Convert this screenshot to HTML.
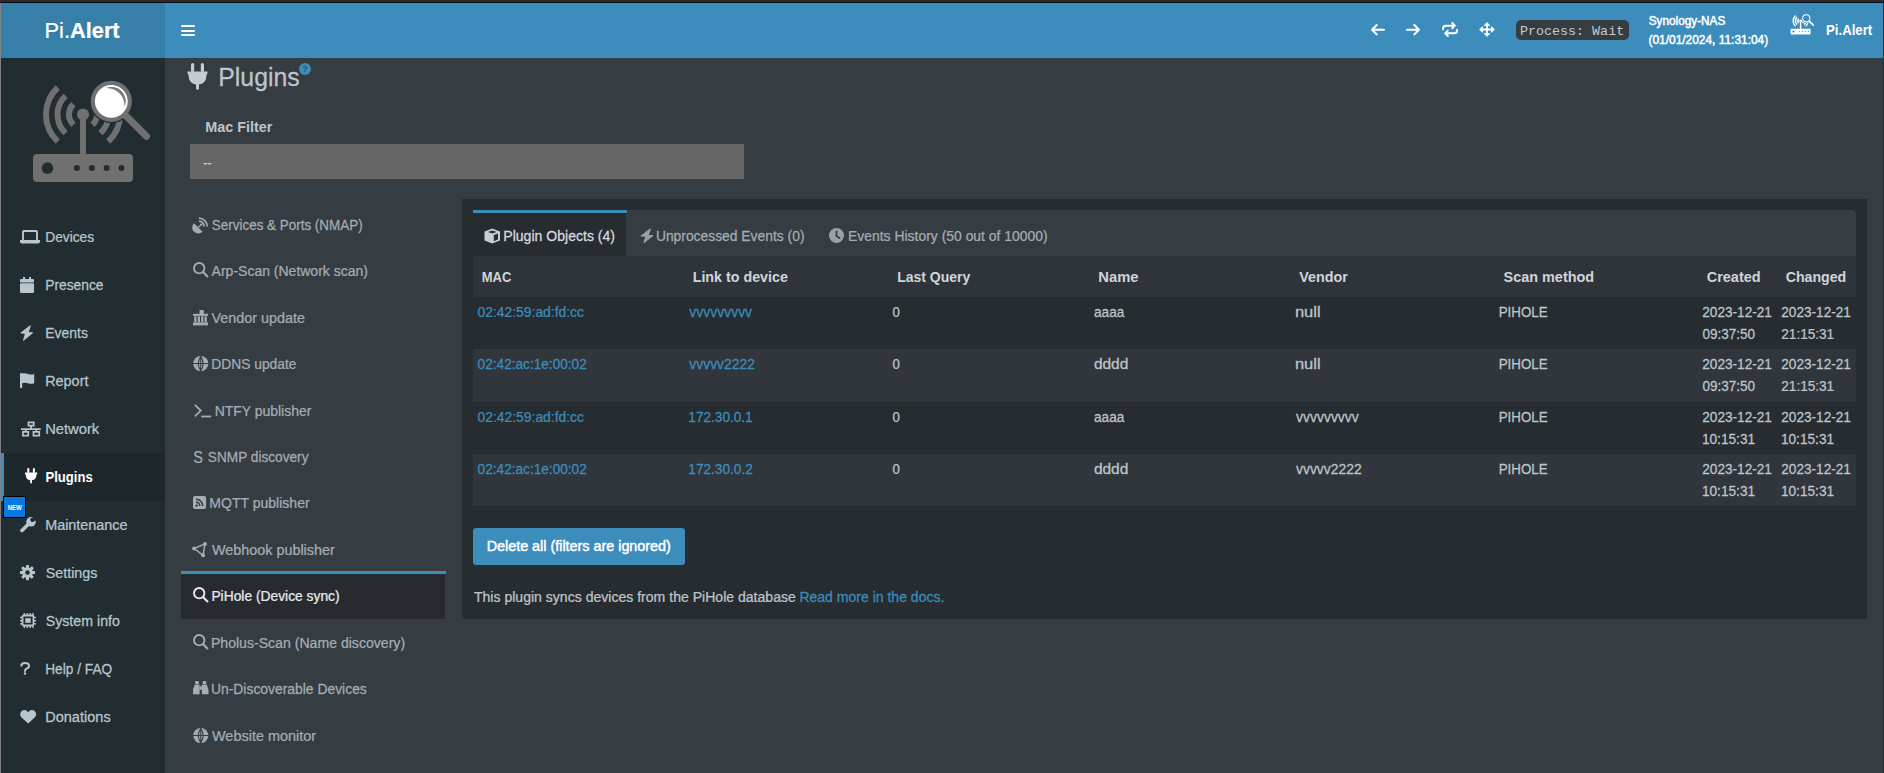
<!DOCTYPE html>
<html><head><meta charset="utf-8"><style>
html,body{margin:0;padding:0;width:1884px;height:773px;overflow:hidden;background:#353c42}
.b{position:absolute}
.i{position:absolute;overflow:visible}
</style></head><body>
<div class="b" style="left:0px;top:0px;width:1884px;height:773px;background:#353c42;"></div>
<div class="b" style="left:0px;top:0px;width:1884px;height:2px;background:#2b2a33;"></div>
<div class="b" style="left:0px;top:2px;width:1884px;height:1px;background:#0c0c0e;"></div>
<div class="b" style="left:1px;top:3px;width:164px;height:55px;background:#367fa9;"></div>
<div class="b" style="left:165px;top:3px;width:1718px;height:55px;background:#3c8dbc;"></div>
<div class="b" style="left:0px;top:3px;width:1px;height:770px;background:#807e87;"></div>
<div class="b" style="left:1883px;top:3px;width:1px;height:770px;background:#29323a;"></div>
<div class="b" style="left:1px;top:58px;width:164px;height:715px;background:#222d32;"></div>
<div class="b" style="left:181px;top:25px;width:13.599999999999994px;height:2px;background:#ffffff;border-radius:1px"></div>
<div class="b" style="left:181px;top:29.5px;width:13.599999999999994px;height:2.0px;background:#ffffff;border-radius:1px"></div>
<div class="b" style="left:181px;top:34px;width:13.599999999999994px;height:2px;background:#ffffff;border-radius:1px"></div>
<svg class="i" style="left:1371.1px;top:23.6px;width:14px;height:11.4px" viewBox="0 0 14 11.4" fill="#ffffff"><path d="M5.7 1 L1 5.7 L5.7 10.4 M1 5.7 H13" stroke="#fff" stroke-width="2" fill="none" stroke-linecap="round" stroke-linejoin="round"/></svg>
<svg class="i" style="left:1406.1px;top:23.6px;width:14px;height:11.4px" viewBox="0 0 14 11.4" fill="#ffffff"><path d="M8.3 1 L13 5.7 L8.3 10.4 M13 5.7 H1" stroke="#fff" stroke-width="2" fill="none" stroke-linecap="round" stroke-linejoin="round"/></svg>
<svg class="i" style="left:1441.6px;top:21.8px;width:16px;height:15px" viewBox="0 0 16 15" fill="#ffffff"><path d="M1 7.3 V6.6 Q1 3.7 3.9 3.7 H12.6 M10.2 1 L12.9 3.7 L10.2 6.4 M15 7.7 V8.4 Q15 11.3 12.1 11.3 H3.4 M5.8 8.6 L3.1 11.3 L5.8 14" stroke="#fff" stroke-width="1.9" fill="none" stroke-linecap="round" stroke-linejoin="round"/></svg>
<svg class="i" style="left:1478.5px;top:21.8px;width:16px;height:15px" viewBox="0 0 16 15" fill="#ffffff"><path d="M8 2.5 V12.5 M2.5 7.5 H13.5" stroke="#fff" stroke-width="1.8"/><path d="M8 0.6 L10.7 3.4 H5.3 Z M8 14.4 L10.7 11.6 H5.3 Z M0.6 7.5 L3.4 4.8 V10.2 Z M15.4 7.5 L12.6 4.8 V10.2 Z" fill="#fff" stroke="#fff" stroke-width="0.9" stroke-linejoin="round"/></svg>
<div class="b" style="left:1516px;top:20px;width:113px;height:20px;background:#353c42;border-radius:5px"></div>
<svg class="i" style="left:1787.9px;top:12.4px;width:28px;height:25px" viewBox="0 0 140 125" fill="#ffffff"><rect x="13" y="84" width="100" height="28" rx="4" fill="#fff"/><circle cx="27.5" cy="98.1" r="5.8" fill="#3c8dbc"/><circle cx="56.9" cy="98.1" r="3" fill="#3c8dbc"/><circle cx="71.8" cy="98.1" r="3" fill="#3c8dbc"/><circle cx="86.6" cy="98.1" r="3" fill="#3c8dbc"/><circle cx="101.5" cy="98.1" r="3" fill="#3c8dbc"/><rect x="59.3125" y="45" width="7.375" height="40" fill="#fff"/><circle cx="63" cy="44.5" r="6.75" fill="#fff"/><path d="M53.45 34.26 A14 14 0 0 0 53.45 54.74" stroke="#fff" stroke-width="7.5" fill="none"/><path d="M45.61 25.85 A25.5 25.5 0 0 0 45.61 63.15" stroke="#fff" stroke-width="7.5" fill="none"/><path d="M37.77 17.44 A37 37 0 0 0 37.77 71.56" stroke="#fff" stroke-width="7.5" fill="none"/><path d="M72.55 54.74 A14 14 0 0 0 72.55 34.26" stroke="#fff" stroke-width="7.5" fill="none"/><path d="M80.39 63.15 A25.5 25.5 0 0 0 80.39 25.85" stroke="#fff" stroke-width="7.5" fill="none"/><path d="M88.23 71.56 A37 37 0 0 0 88.23 17.44" stroke="#fff" stroke-width="7.5" fill="none"/><circle cx="91.3" cy="31.3" r="23" fill="#3c8dbc"/><path d="M104 44 L126.5 66.2" stroke="#3c8dbc" stroke-width="12.5" stroke-linecap="round"/><path d="M104 44 L126.5 66.2" stroke="#fff" stroke-width="8.75" stroke-linecap="round"/><circle cx="91.3" cy="31.3" r="20.6" fill="#fff"/><circle cx="91.3" cy="31.3" r="15.350000000000001" fill="#3c8dbc"/></svg>
<svg class="i" style="left:20px;top:70px;width:140px;height:125px" viewBox="0 0 140 125" fill="#707070"><rect x="13" y="84" width="100" height="28" rx="4" fill="#707070"/><circle cx="27.5" cy="98.1" r="5.8" fill="#222d32"/><circle cx="56.9" cy="98.1" r="3" fill="#222d32"/><circle cx="71.8" cy="98.1" r="3" fill="#222d32"/><circle cx="86.6" cy="98.1" r="3" fill="#222d32"/><circle cx="101.5" cy="98.1" r="3" fill="#222d32"/><rect x="60.05" y="45" width="5.9" height="40" fill="#707070"/><circle cx="63" cy="44.5" r="6.0" fill="#707070"/><path d="M53.45 34.26 A14 14 0 0 0 53.45 54.74" stroke="#707070" stroke-width="6.0" fill="none"/><path d="M45.61 25.85 A25.5 25.5 0 0 0 45.61 63.15" stroke="#707070" stroke-width="6.0" fill="none"/><path d="M37.77 17.44 A37 37 0 0 0 37.77 71.56" stroke="#707070" stroke-width="6.0" fill="none"/><path d="M72.55 54.74 A14 14 0 0 0 72.55 34.26" stroke="#707070" stroke-width="6.0" fill="none"/><path d="M80.39 63.15 A25.5 25.5 0 0 0 80.39 25.85" stroke="#707070" stroke-width="6.0" fill="none"/><path d="M88.23 71.56 A37 37 0 0 0 88.23 17.44" stroke="#707070" stroke-width="6.0" fill="none"/><circle cx="91.3" cy="31.3" r="21.9" fill="#222d32"/><path d="M104 44 L126.5 66.2" stroke="#222d32" stroke-width="10.0" stroke-linecap="round"/><path d="M104 44 L126.5 66.2" stroke="#707070" stroke-width="7.0" stroke-linecap="round"/><circle cx="91.3" cy="31.3" r="20.6" fill="#707070"/><circle cx="91.3" cy="31.3" r="16.400000000000002" fill="#ffffff"/><path d="M85.91 17.95 L87.23 17.49 L88.59 17.16 L89.98 16.96 L91.38 16.90 L92.78 16.98 L94.17 17.19 L95.53 17.54 L96.85 18.01 L98.12 18.62 L99.32 19.34 L100.44 20.18 L101.48 21.12 L102.42 22.16 L103.26 23.28 L103.98 24.48 L104.59 25.75 L105.06 27.07 L105.41 28.43 L105.62 29.82 L105.70 31.22 L105.64 32.62 L105.44 34.01 L105.11 35.37 L104.65 36.69 L104.65 36.69 L104.42 35.17 L104.30 33.79 L104.11 32.48 L103.85 31.23 L103.52 30.03 L103.10 28.90 L102.63 27.82 L102.08 26.80 L101.48 25.83 L100.83 24.91 L100.12 24.05 L99.36 23.24 L98.55 22.48 L97.69 21.77 L96.77 21.12 L95.80 20.52 L94.78 19.97 L93.70 19.50 L92.57 19.08 L91.37 18.75 L90.12 18.49 L88.81 18.30 L87.43 18.18 L85.91 17.95 Z" fill="#7a7a7a"/></svg>
<div class="b" style="left:1px;top:453px;width:164px;height:48px;background:#1e282c;"></div>
<div class="b" style="left:1px;top:453px;width:3px;height:48px;background:#3c8dbc;"></div>
<svg class="i" style="left:19.8px;top:229.5px;width:20px;height:14px" viewBox="0 0 20 14" fill="#b8c7ce"><path d="M3 10.5 V2 Q3 1 4 1 H16 Q17 1 17 2 V10.5" stroke="#b8c7ce" stroke-width="1.9" fill="none"/><path d="M0 10 H20 V11.5 Q20 13.5 18 13.5 H2 Q0 13.5 0 11.5 Z"/></svg>
<svg class="i" style="left:20px;top:276.5px;width:14px;height:16px" viewBox="0 0 14 16" fill="#b8c7ce"><rect x="3" y="0" width="2" height="3"/><rect x="9" y="0" width="2" height="3"/><rect x="0" y="2" width="14" height="3.5" rx="1"/><rect x="0" y="6.2" width="14" height="9.8" rx="1"/></svg>
<svg class="i" style="left:20.4px;top:324.5px;width:13.5px;height:16px" viewBox="0 0 13.5 16" fill="#b8c7ce"><path d="M10.2 1 L1.1 8 L5.6 8.2 L3.6 15.2 L12.4 7.8 L7.9 7.5 Z" stroke="#b8c7ce" stroke-width="1.1" stroke-linejoin="round"/></svg>
<svg class="i" style="left:19.7px;top:373px;width:15px;height:15.5px" viewBox="0 0 15 15.5" fill="#b8c7ce"><rect x="0" y="0" width="2.2" height="15.2" rx="1"/><path d="M1.5 0.6 Q5 -0.3 8 0.9 Q11 2 14.2 0.9 V10.2 Q11 11.3 8 10.2 Q5 9.1 1.5 10.3 Z"/></svg>
<svg class="i" style="left:20.9px;top:420.5px;width:20px;height:16px" viewBox="0 0 20 16" fill="#b8c7ce"><rect x="7.45" y="1.35" width="5.3" height="3.3" stroke="#b8c7ce" stroke-width="1.7" fill="none"/><rect x="9.2" y="5" width="1.7" height="3"/><rect x="0" y="7.3" width="19.8" height="1.7"/><rect x="3.8" y="8.5" width="1.7" height="2.5"/><rect x="14.4" y="8.5" width="1.7" height="2.5"/><rect x="1.95" y="10.85" width="5.3" height="3.8" stroke="#b8c7ce" stroke-width="1.7" fill="none"/><rect x="12.45" y="10.85" width="5.8" height="3.8" stroke="#b8c7ce" stroke-width="1.7" fill="none"/></svg>
<svg class="i" style="left:24.8px;top:468.4px;width:12.2px;height:15.2px" viewBox="0 0 12.2 15.2" fill="#ffffff"><rect x="2.3" y="0" width="2" height="5" rx="1"/><rect x="7.9" y="0" width="2" height="5" rx="1"/><path d="M0 4.5 H12.2 V6 Q11.3 6.5 11.3 7.5 Q11.3 11.5 7 12.3 V15.2 H5.2 V12.3 Q0.9 11.5 0.9 7.5 Q0.9 6.5 0 6 Z"/></svg>
<svg class="i" style="left:20px;top:517px;width:16px;height:15.5px" viewBox="0 0 16 15.5" fill="#b8c7ce"><path d="M2 13.5 L8.5 7" stroke="#b8c7ce" stroke-width="3.6" stroke-linecap="round"/><circle cx="11" cy="4.8" r="4.8"/><path d="M11 4.8 L14.5 -1.5 L17.5 3 Z" fill="#222d32"/><circle cx="12.5" cy="2.8" r="2.2" fill="#222d32"/></svg>
<svg class="i" style="left:20.4px;top:565px;width:15px;height:15.2px" viewBox="0 0 15 15.2" fill="#b8c7ce"><circle cx="7.5" cy="7.6" r="5.3"/><rect x="6" y="0" width="3" height="4" rx="0.6" transform="rotate(0 7.5 7.6)"/><rect x="6" y="0" width="3" height="4" rx="0.6" transform="rotate(45 7.5 7.6)"/><rect x="6" y="0" width="3" height="4" rx="0.6" transform="rotate(90 7.5 7.6)"/><rect x="6" y="0" width="3" height="4" rx="0.6" transform="rotate(135 7.5 7.6)"/><rect x="6" y="0" width="3" height="4" rx="0.6" transform="rotate(180 7.5 7.6)"/><rect x="6" y="0" width="3" height="4" rx="0.6" transform="rotate(225 7.5 7.6)"/><rect x="6" y="0" width="3" height="4" rx="0.6" transform="rotate(270 7.5 7.6)"/><rect x="6" y="0" width="3" height="4" rx="0.6" transform="rotate(315 7.5 7.6)"/><circle cx="7.5" cy="7.6" r="2.3" fill="#222d32"/></svg>
<svg class="i" style="left:20.1px;top:612.6px;width:16px;height:15.1px" viewBox="0 0 16 15.1" fill="#b8c7ce"><rect x="2.5" y="2.5" width="11" height="10" rx="1.5" stroke="#b8c7ce" stroke-width="1.8" fill="none"/><rect x="5.3" y="5.2" width="5.4" height="4.6"/><rect x="3.6" y="0" width="1.3" height="2.5"/><rect x="3.6" y="12.6" width="1.3" height="2.5"/><rect x="6.5" y="0" width="1.3" height="2.5"/><rect x="6.5" y="12.6" width="1.3" height="2.5"/><rect x="9.4" y="0" width="1.3" height="2.5"/><rect x="9.4" y="12.6" width="1.3" height="2.5"/><rect x="12.3" y="0" width="1.3" height="2.5"/><rect x="12.3" y="12.6" width="1.3" height="2.5"/><rect x="0" y="3.8" width="2.5" height="1.3"/><rect x="13.5" y="3.8" width="2.5" height="1.3"/><rect x="0" y="7.0" width="2.5" height="1.3"/><rect x="13.5" y="7.0" width="2.5" height="1.3"/><rect x="0" y="10.2" width="2.5" height="1.3"/><rect x="13.5" y="10.2" width="2.5" height="1.3"/></svg>
<svg class="i" style="left:20.4px;top:662.2px;width:10.5px;height:12.8px" viewBox="0 0 10.5 12.8" fill="#b8c7ce"><path d="M1.3 3.8 Q1.3 1 5.1 1 Q9 1 9 3.9 Q9 5.8 6.5 6.6 Q5 7.1 5 9" stroke="#b8c7ce" stroke-width="2" fill="none" stroke-linecap="round"/><circle cx="5" cy="11.6" r="1.25"/></svg>
<svg class="i" style="left:19.7px;top:710px;width:16.3px;height:13.6px" viewBox="0 0 16.3 13.6" fill="#b8c7ce"><path d="M8.15 13.6 L1.3 7.2 Q-0.5 5 0.4 2.7 Q1.5 0 4.3 0 Q6.6 0 8.15 2.2 Q9.7 0 12 0 Q14.8 0 15.9 2.7 Q16.8 5 15 7.2 Z"/></svg>
<div class="b" style="left:3px;top:496px;width:23px;height:22px;background:#0b78e0;border:1px solid #000;box-sizing:border-box"></div>
<svg class="i" style="left:187px;top:62.5px;width:21px;height:27px" viewBox="0 0 21 27" fill="#c5cbd0"><rect x="4" y="0" width="3.2" height="9" rx="1.6"/><rect x="13.8" y="0" width="3.2" height="9" rx="1.6"/><path d="M0.5 8.5 H20.5 V10.5 Q19.5 11 19.5 12.5 Q19.5 20 12 21.5 V26 Q10.5 27.5 9 26 V21.5 Q1.5 20 1.5 12.5 Q1.5 11 0.5 10.5 Z"/></svg>
<div class="b" style="left:299px;top:63px;width:12px;height:12px;border-radius:50%;background:#3c8dbc;color:#2a4d68;font:bold 9px/12px 'Liberation Sans',sans-serif;text-align:center">?</div>
<div class="b" style="left:190px;top:144px;width:554px;height:35px;background:#666666;"></div>
<svg class="i" style="left:192.5px;top:216.5px;width:16px;height:16px" viewBox="0 0 16 16" fill="#a6acb2"><path d="M1 6.2 A6.08 6.08 0 0 0 9.6 14.8 Z"/><path d="M5.3 10.5 L8 7.8" stroke="#a6acb2" stroke-width="1.2"/><circle cx="8.2" cy="7.6" r="1.1"/><path d="M5.9 1.1 A8.3 8.3 0 0 1 14.2 9.4 M5.9 4.2 A5.2 5.2 0 0 1 11.1 9.4" stroke="#a6acb2" stroke-width="1.7" fill="none"/></svg>
<svg class="i" style="left:192.7px;top:262.2px;width:15.5px;height:15.5px" viewBox="0 0 15.5 15.5" fill="#a6acb2"><circle cx="6.2" cy="6.2" r="5.2" stroke="#a6acb2" stroke-width="1.9" fill="none"/><path d="M10 10 L14.4 14.4" stroke="#a6acb2" stroke-width="2.1" stroke-linecap="round"/></svg>
<svg class="i" style="left:193.2px;top:309.6px;width:15px;height:15.4px" viewBox="0 0 15 15.4" fill="#a6acb2"><rect x="6.6" y="0" width="4.2" height="4"/><rect x="0" y="3.8" width="15" height="2.1"/><rect x="1.2" y="6.4" width="2.3" height="5.8"/><rect x="4.7" y="6.4" width="2.3" height="5.8"/><rect x="8.1" y="6.4" width="2.3" height="5.8"/><rect x="11.5" y="6.4" width="2.3" height="5.8"/><rect x="0" y="12.4" width="15" height="3"/></svg>
<svg class="i" style="left:192.8px;top:355.6px;width:15.5px;height:15.1px" viewBox="0 0 15.5 15.1" fill="#a6acb2"><circle cx="7.75" cy="7.55" r="7.55"/><path d="M0 7.55 H15.5 M7.75 0 V15.1 M7.75 0.2 Q3 7.55 7.75 14.9 M7.75 0.2 Q12.5 7.55 7.75 14.9" stroke="#353c42" stroke-width="1.1" fill="none"/></svg>
<svg class="i" style="left:193.9px;top:403.6px;width:17.2px;height:13.4px" viewBox="0 0 17.2 13.4" fill="#a6acb2"><path d="M0.8 0.8 L6.8 6.6 L0.8 12.4" stroke="#a6acb2" stroke-width="1.8" fill="none"/><rect x="7.2" y="11.6" width="10" height="1.8"/></svg>
<svg class="i" style="left:193.2px;top:495.9px;width:13.1px;height:13.1px" viewBox="0 0 13.1 13.1" fill="#a6acb2"><rect x="0" y="0" width="13.1" height="13.1" rx="2"/><path d="M3 3.3 A6.8 6.8 0 0 1 9.8 10.1 M3 6.3 A3.8 3.8 0 0 1 6.8 10.1" stroke="#353c42" stroke-width="1.6" fill="none"/><circle cx="3.6" cy="9.6" r="1.2" fill="#353c42"/></svg>
<svg class="i" style="left:192px;top:541.5px;width:16px;height:15.5px" viewBox="0 0 16 15.5" fill="#a6acb2"><path d="M2.1 6.5 L13 1.9 L11.1 13.3 Z" stroke="#a6acb2" stroke-width="1.5" fill="none" stroke-linejoin="round"/><circle cx="2.1" cy="6.5" r="2"/><circle cx="13" cy="1.9" r="1.9"/><circle cx="11.1" cy="13.3" r="2"/></svg>
<div class="b" style="left:181px;top:571px;width:265px;height:3px;background:#3c8dbc;"></div>
<div class="b" style="left:181px;top:574px;width:264px;height:45px;background:#272b2f;"></div>
<svg class="i" style="left:192.7px;top:587.2px;width:15.5px;height:15.5px" viewBox="0 0 15.5 15.5" fill="#e8ebee"><circle cx="6.2" cy="6.2" r="5.2" stroke="#e8ebee" stroke-width="1.9" fill="none"/><path d="M10 10 L14.4 14.4" stroke="#e8ebee" stroke-width="2.1" stroke-linecap="round"/></svg>
<svg class="i" style="left:192.7px;top:634.2px;width:15.5px;height:15.5px" viewBox="0 0 15.5 15.5" fill="#a6acb2"><circle cx="6.2" cy="6.2" r="5.2" stroke="#a6acb2" stroke-width="1.9" fill="none"/><path d="M10 10 L14.4 14.4" stroke="#a6acb2" stroke-width="2.1" stroke-linecap="round"/></svg>
<svg class="i" style="left:192.8px;top:681.2px;width:15.5px;height:13.2px" viewBox="0 0 15.5 13.2" fill="#a6acb2"><rect x="2.2" y="0" width="3.6" height="3" rx="0.6"/><rect x="9.7" y="0" width="3.6" height="3" rx="0.6"/><path d="M1.8 3.4 H6.6 V13.2 H0 V8.5 Z M8.9 3.4 H13.7 L15.5 8.5 V13.2 H8.9 Z"/><rect x="6.6" y="5.2" width="2.3" height="3.6"/></svg>
<svg class="i" style="left:192.8px;top:727.6px;width:15.5px;height:15.1px" viewBox="0 0 15.5 15.1" fill="#a6acb2"><circle cx="7.75" cy="7.55" r="7.55"/><path d="M0 7.55 H15.5 M7.75 0 V15.1 M7.75 0.2 Q3 7.55 7.75 14.9 M7.75 0.2 Q12.5 7.55 7.75 14.9" stroke="#353c42" stroke-width="1.1" fill="none"/></svg>
<div class="b" style="left:462px;top:199px;width:1405px;height:420px;background:#272c30;border-radius:0 0 3px 3px"></div>
<div class="b" style="left:473px;top:210px;width:1383px;height:46px;background:#353c42;border-radius:0 4.5px 0 0"></div>
<div class="b" style="left:473px;top:210px;width:154px;height:3px;background:#3c8dbc;"></div>
<div class="b" style="left:473px;top:213px;width:153px;height:45px;background:#272c30;"></div>
<svg class="i" style="left:484px;top:227.5px;width:16px;height:16px" viewBox="0 0 16 16" fill="#c8ced3"><path d="M8.3 0.5 L16 3.5 V12.5 L8.3 15.5 L0.5 12.5 V3.5 Z" fill="#c8ced3"/><path d="M8.3 2.4 L12.8 4 L8.3 5.6 L3.8 4 Z" fill="#272c30"/><path d="M9.8 7 L14 5.6 V11.6 L9.8 13.2 Z" fill="#272c30"/></svg>
<svg class="i" style="left:639.5px;top:227.5px;width:14px;height:16px" viewBox="0 0 14 16" fill="#9aa1a7"><path d="M10.4 1 L1.3 7.9 L5.9 8.1 L4 14.6 L12.8 7.6 L8.1 7.3 Z" stroke="#9aa1a7" stroke-width="1.1" stroke-linejoin="round"/></svg>
<svg class="i" style="left:829px;top:228px;width:15px;height:15px" viewBox="0 0 15 15" fill="#9aa1a7"><circle cx="7.5" cy="7.5" r="7.5"/><path d="M7.5 3.5 V8 L10.5 10" stroke="#353c42" stroke-width="1.8" fill="none" stroke-linecap="round"/></svg>
<div class="b" style="left:473px;top:256px;width:1383px;height:41px;background:#2e343a;"></div>
<div class="b" style="left:473px;top:297px;width:1383px;height:52.25px;background:#272c30;"></div>
<div class="b" style="left:473px;top:349.25px;width:1383px;height:52.25px;background:#30363c;"></div>
<div class="b" style="left:473px;top:401.5px;width:1383px;height:52.25px;background:#272c30;"></div>
<div class="b" style="left:473px;top:453.75px;width:1383px;height:52.25px;background:#30363c;"></div>
<div class="b" style="left:473px;top:528px;width:212px;height:37px;background:#3c8dbc;border-radius:3px"></div>
<svg class="i" style="left:0;top:0;width:1884px;height:773px" viewBox="0 0 1884 773">
<text x="0.00" y="0.00" font-size="22.8" fill="#ffffff" font-weight="normal" font-family="Liberation Sans" transform="translate(44.6 38) scale(0.955 1)"  stroke="#ffffff" stroke-width="0.25">Pi.<tspan font-weight="bold">Alert</tspan></text>
<text x="0.00" y="0.00" font-size="13.51" fill="#c8c8c8" font-weight="normal" font-family="Liberation Mono" transform="translate(1519.88 35.00) scale(0.9902 1)" >Process: Wait</text>
<text x="0.00" y="0.00" font-size="12.65" fill="#ffffff" font-weight="normal" font-family="Liberation Sans" transform="translate(1648.72 25.00) scale(0.9311 1)" stroke="#fff" stroke-width="0.5">Synology-NAS</text>
<text x="0.00" y="0.00" font-size="12.79" fill="#ffffff" font-weight="normal" font-family="Liberation Sans" transform="translate(1648.50 44.00) scale(0.9321 1)" stroke="#fff" stroke-width="0.5">(01/01/2024, 11:31:04)</text>
<text x="0.00" y="0.00" font-size="14.39" fill="#ffffff" font-weight="bold" font-family="Liberation Sans" transform="translate(1826.06 35.00) scale(0.9164 1)" >Pi.Alert</text>
<text x="0.00" y="0.00" font-size="14.53" fill="#b8c7ce" font-weight="normal" font-family="Liberation Sans" transform="translate(45.22 242.00) scale(0.9460 1)" stroke="#b8c7ce" stroke-width="0.25">Devices</text>
<text x="0.00" y="0.00" font-size="14.53" fill="#b8c7ce" font-weight="normal" font-family="Liberation Sans" transform="translate(45.21 290.00) scale(0.9504 1)" stroke="#b8c7ce" stroke-width="0.25">Presence</text>
<text x="0.00" y="0.00" font-size="14.53" fill="#b8c7ce" font-weight="normal" font-family="Liberation Sans" transform="translate(45.20 338.00) scale(0.9618 1)" stroke="#b8c7ce" stroke-width="0.25">Events</text>
<text x="0.00" y="0.00" font-size="14.53" fill="#b8c7ce" font-weight="normal" font-family="Liberation Sans" transform="translate(45.16 386.00) scale(0.9930 1)" stroke="#b8c7ce" stroke-width="0.25">Report</text>
<text x="0.00" y="0.00" font-size="14.53" fill="#b8c7ce" font-weight="normal" font-family="Liberation Sans" transform="translate(45.13 434.00) scale(1.0152 1)" stroke="#b8c7ce" stroke-width="0.25">Network</text>
<text x="0.00" y="0.00" font-size="14.53" fill="#ffffff" font-weight="bold" font-family="Liberation Sans" transform="translate(45.47 482.00) scale(0.8997 1)" >Plugins</text>
<text x="0.00" y="0.00" font-size="14.53" fill="#b8c7ce" font-weight="normal" font-family="Liberation Sans" transform="translate(45.16 530.00) scale(0.9915 1)" stroke="#b8c7ce" stroke-width="0.25">Maintenance</text>
<text x="0.00" y="0.00" font-size="14.53" fill="#b8c7ce" font-weight="normal" font-family="Liberation Sans" transform="translate(45.71 578.00) scale(0.9855 1)" stroke="#b8c7ce" stroke-width="0.25">Settings</text>
<text x="0.00" y="0.00" font-size="14.53" fill="#b8c7ce" font-weight="normal" font-family="Liberation Sans" transform="translate(45.71 626.00) scale(0.9776 1)" stroke="#b8c7ce" stroke-width="0.25">System info</text>
<text x="0.00" y="0.00" font-size="14.53" fill="#b8c7ce" font-weight="normal" font-family="Liberation Sans" transform="translate(45.22 674.00) scale(0.9424 1)" stroke="#b8c7ce" stroke-width="0.25">Help / FAQ</text>
<text x="0.00" y="0.00" font-size="14.53" fill="#b8c7ce" font-weight="normal" font-family="Liberation Sans" transform="translate(45.15 722.00) scale(1.0026 1)" stroke="#b8c7ce" stroke-width="0.25">Donations</text>
<text x="0.00" y="0.00" font-size="6.98" fill="#ffffff" font-weight="bold" font-family="Liberation Sans" transform="translate(7.64 510.00) scale(0.8670 1)" >NEW</text>
<text x="0.00" y="0.00" font-size="26.02" fill="#bec5cb" font-weight="normal" font-family="Liberation Sans" transform="translate(218.30 86.00) scale(0.9541 1)"  stroke="#bec5cb" stroke-width="0.25">Plugins</text>
<text x="0.00" y="0.00" font-size="14.39" fill="#bec5cb" font-weight="bold" font-family="Liberation Sans" transform="translate(205.18 132.00) scale(0.9998 1)" >Mac Filter</text>
<text x="203.00" y="167.00" font-size="13" fill="#cfcfcf" font-weight="normal" font-family="Liberation Sans"  stroke="#cfcfcf" stroke-width="0.25">--</text>
<text x="0.00" y="0.00" font-size="13.95" fill="#a6acb2" font-weight="normal" font-family="Liberation Sans" transform="translate(211.85 230.00) scale(0.9635 1)"  stroke="#a6acb2" stroke-width="0.25">Services &amp; Ports (NMAP)</text>
<text x="0.00" y="0.00" font-size="13.95" fill="#a6acb2" font-weight="normal" font-family="Liberation Sans" transform="translate(211.62 276.00) scale(1.0033 1)"  stroke="#a6acb2" stroke-width="0.25">Arp-Scan (Network scan)</text>
<text x="0.00" y="0.00" font-size="13.95" fill="#a6acb2" font-weight="normal" font-family="Liberation Sans" transform="translate(211.58 323.00) scale(1.0310 1)"  stroke="#a6acb2" stroke-width="0.25">Vendor update</text>
<text x="0.00" y="0.00" font-size="13.95" fill="#a6acb2" font-weight="normal" font-family="Liberation Sans" transform="translate(211.31 369.00) scale(0.9899 1)"  stroke="#a6acb2" stroke-width="0.25">DDNS update</text>
<text x="0.00" y="0.00" font-size="13.95" fill="#a6acb2" font-weight="normal" font-family="Liberation Sans" transform="translate(214.70 416.00) scale(1.0010 1)"  stroke="#a6acb2" stroke-width="0.25">NTFY publisher</text>
<text x="0.00" y="0.00" font-size="17" fill="#a6acb2" font-weight="normal" font-family="Liberation Sans" transform="translate(193.2 462.6) scale(0.85 1)"  stroke="#a6acb2" stroke-width="0.25">S</text>
<text x="0.00" y="0.00" font-size="13.95" fill="#a6acb2" font-weight="normal" font-family="Liberation Sans" transform="translate(207.84 462.00) scale(0.9794 1)"  stroke="#a6acb2" stroke-width="0.25">SNMP discovery</text>
<text x="0.00" y="0.00" font-size="13.95" fill="#a6acb2" font-weight="normal" font-family="Liberation Sans" transform="translate(209.29 508.00) scale(1.0070 1)"  stroke="#a6acb2" stroke-width="0.25">MQTT publisher</text>
<text x="0.00" y="0.00" font-size="13.95" fill="#a6acb2" font-weight="normal" font-family="Liberation Sans" transform="translate(211.98 555.00) scale(1.0310 1)"  stroke="#a6acb2" stroke-width="0.25">Webhook publisher</text>
<text x="0.00" y="0.00" font-size="13.95" fill="#e8ebee" font-weight="normal" font-family="Liberation Sans" transform="translate(211.41 601.00) scale(0.9914 1)"  stroke="#e8ebee" stroke-width="0.25">PiHole (Device sync)</text>
<text x="0.00" y="0.00" font-size="13.95" fill="#a6acb2" font-weight="normal" font-family="Liberation Sans" transform="translate(210.89 648.00) scale(1.0109 1)"  stroke="#a6acb2" stroke-width="0.25">Pholus-Scan (Name discovery)</text>
<text x="0.00" y="0.00" font-size="13.95" fill="#a6acb2" font-weight="normal" font-family="Liberation Sans" transform="translate(210.97 694.00) scale(0.9962 1)"  stroke="#a6acb2" stroke-width="0.25">Un-Discoverable Devices</text>
<text x="0.00" y="0.00" font-size="13.95" fill="#a6acb2" font-weight="normal" font-family="Liberation Sans" transform="translate(211.98 741.00) scale(1.0370 1)"  stroke="#a6acb2" stroke-width="0.25">Website monitor</text>
<text x="0.00" y="0.00" font-size="14.24" fill="#d7dce0" font-weight="normal" font-family="Liberation Sans" transform="translate(503.29 241.00) scale(0.9885 1)"  stroke="#d7dce0" stroke-width="0.25">Plugin Objects (4)</text>
<text x="0.00" y="0.00" font-size="14.24" fill="#a6acb2" font-weight="normal" font-family="Liberation Sans" transform="translate(655.88 241.00) scale(0.9732 1)"  stroke="#a6acb2" stroke-width="0.25">Unprocessed Events (0)</text>
<text x="0.00" y="0.00" font-size="14.24" fill="#a6acb2" font-weight="normal" font-family="Liberation Sans" transform="translate(848.00 241.00) scale(0.9786 1)"  stroke="#a6acb2" stroke-width="0.25">Events History (50 out of 10000)</text>
<text x="0.00" y="0.00" font-size="13.95" fill="#d0d5da" font-weight="bold" font-family="Liberation Sans" transform="translate(481.77 282.00) scale(0.9326 1)" >MAC</text>
<text x="0.00" y="0.00" font-size="13.95" fill="#d0d5da" font-weight="bold" font-family="Liberation Sans" transform="translate(692.68 282.00) scale(1.0247 1)" >Link to device</text>
<text x="0.00" y="0.00" font-size="13.95" fill="#d0d5da" font-weight="bold" font-family="Liberation Sans" transform="translate(897.21 282.00) scale(1.0033 1)" >Last Query</text>
<text x="0.00" y="0.00" font-size="13.95" fill="#d0d5da" font-weight="bold" font-family="Liberation Sans" transform="translate(1098.25 282.00) scale(1.0603 1)" >Name</text>
<text x="0.00" y="0.00" font-size="13.95" fill="#d0d5da" font-weight="bold" font-family="Liberation Sans" transform="translate(1299.34 282.00) scale(1.0258 1)" >Vendor</text>
<text x="0.00" y="0.00" font-size="13.95" fill="#d0d5da" font-weight="bold" font-family="Liberation Sans" transform="translate(1503.62 282.00) scale(1.0340 1)" >Scan method</text>
<text x="0.00" y="0.00" font-size="13.95" fill="#d0d5da" font-weight="bold" font-family="Liberation Sans" transform="translate(1706.67 282.00) scale(1.0401 1)" >Created</text>
<text x="0.00" y="0.00" font-size="13.95" fill="#d0d5da" font-weight="bold" font-family="Liberation Sans" transform="translate(1785.68 282.00) scale(1.0151 1)" >Changed</text>
<text x="0.00" y="0.00" font-size="13.81" fill="#3c8dbc" font-weight="normal" font-family="Liberation Sans" transform="translate(477.60 317.00) scale(1.0037 1)"  stroke="#3c8dbc" stroke-width="0.25">02:42:59:ad:fd:cc</text>
<text x="0.00" y="0.00" font-size="13.81" fill="#3c8dbc" font-weight="normal" font-family="Liberation Sans" transform="translate(689.32 317.00) scale(1.0102 1)"  stroke="#3c8dbc" stroke-width="0.25">vvvvvvvvv</text>
<text x="0.00" y="0.00" font-size="13.81" fill="#bec5cb" font-weight="normal" font-family="Liberation Sans" transform="translate(892.42 317.00) scale(0.9555 1)"  stroke="#bec5cb" stroke-width="0.25">0</text>
<text x="0.00" y="0.00" font-size="13.81" fill="#bec5cb" font-weight="normal" font-family="Liberation Sans" transform="translate(1093.97 317.00) scale(0.9888 1)"  stroke="#bec5cb" stroke-width="0.25">aaaa</text>
<text x="0.00" y="0.00" font-size="13.81" fill="#bec5cb" font-weight="normal" font-family="Liberation Sans" transform="translate(1294.93 317.00) scale(1.1964 1)"  stroke="#bec5cb" stroke-width="0.25">null</text>
<text x="0.00" y="0.00" font-size="13.81" fill="#bec5cb" font-weight="normal" font-family="Liberation Sans" transform="translate(1498.65 317.00) scale(0.9690 1)"  stroke="#bec5cb" stroke-width="0.25">PIHOLE</text>
<text x="0.00" y="0.00" font-size="13.95" fill="#bec5cb" font-weight="normal" font-family="Liberation Sans" transform="translate(1702.27 317.00) scale(0.9770 1)"  stroke="#bec5cb" stroke-width="0.25">2023-12-21</text>
<text x="0.00" y="0.00" font-size="13.95" fill="#bec5cb" font-weight="normal" font-family="Liberation Sans" transform="translate(1702.41 339.00) scale(0.9693 1)"  stroke="#bec5cb" stroke-width="0.25">09:37:50</text>
<text x="0.00" y="0.00" font-size="13.95" fill="#bec5cb" font-weight="normal" font-family="Liberation Sans" transform="translate(1781.27 317.00) scale(0.9770 1)"  stroke="#bec5cb" stroke-width="0.25">2023-12-21</text>
<text x="0.00" y="0.00" font-size="13.95" fill="#bec5cb" font-weight="normal" font-family="Liberation Sans" transform="translate(1781.27 339.00) scale(0.9744 1)"  stroke="#bec5cb" stroke-width="0.25">21:15:31</text>
<text x="0.00" y="0.00" font-size="13.81" fill="#3c8dbc" font-weight="normal" font-family="Liberation Sans" transform="translate(477.60 369.00) scale(0.9873 1)"  stroke="#3c8dbc" stroke-width="0.25">02:42:ac:1e:00:02</text>
<text x="0.00" y="0.00" font-size="13.81" fill="#3c8dbc" font-weight="normal" font-family="Liberation Sans" transform="translate(689.32 369.00) scale(1.0065 1)"  stroke="#3c8dbc" stroke-width="0.25">vvvvv2222</text>
<text x="0.00" y="0.00" font-size="13.81" fill="#bec5cb" font-weight="normal" font-family="Liberation Sans" transform="translate(892.42 369.00) scale(0.9555 1)"  stroke="#bec5cb" stroke-width="0.25">0</text>
<text x="0.00" y="0.00" font-size="13.81" fill="#bec5cb" font-weight="normal" font-family="Liberation Sans" transform="translate(1093.89 369.00) scale(1.1218 1)"  stroke="#bec5cb" stroke-width="0.25">dddd</text>
<text x="0.00" y="0.00" font-size="13.81" fill="#bec5cb" font-weight="normal" font-family="Liberation Sans" transform="translate(1294.93 369.00) scale(1.1964 1)"  stroke="#bec5cb" stroke-width="0.25">null</text>
<text x="0.00" y="0.00" font-size="13.81" fill="#bec5cb" font-weight="normal" font-family="Liberation Sans" transform="translate(1498.65 369.00) scale(0.9690 1)"  stroke="#bec5cb" stroke-width="0.25">PIHOLE</text>
<text x="0.00" y="0.00" font-size="13.95" fill="#bec5cb" font-weight="normal" font-family="Liberation Sans" transform="translate(1702.27 369.00) scale(0.9770 1)"  stroke="#bec5cb" stroke-width="0.25">2023-12-21</text>
<text x="0.00" y="0.00" font-size="13.95" fill="#bec5cb" font-weight="normal" font-family="Liberation Sans" transform="translate(1702.41 391.00) scale(0.9693 1)"  stroke="#bec5cb" stroke-width="0.25">09:37:50</text>
<text x="0.00" y="0.00" font-size="13.95" fill="#bec5cb" font-weight="normal" font-family="Liberation Sans" transform="translate(1781.27 369.00) scale(0.9770 1)"  stroke="#bec5cb" stroke-width="0.25">2023-12-21</text>
<text x="0.00" y="0.00" font-size="13.95" fill="#bec5cb" font-weight="normal" font-family="Liberation Sans" transform="translate(1781.27 391.00) scale(0.9744 1)"  stroke="#bec5cb" stroke-width="0.25">21:15:31</text>
<text x="0.00" y="0.00" font-size="13.81" fill="#3c8dbc" font-weight="normal" font-family="Liberation Sans" transform="translate(477.60 422.00) scale(1.0037 1)"  stroke="#3c8dbc" stroke-width="0.25">02:42:59:ad:fd:cc</text>
<text x="0.00" y="0.00" font-size="13.81" fill="#3c8dbc" font-weight="normal" font-family="Liberation Sans" transform="translate(688.33 422.00) scale(0.9866 1)"  stroke="#3c8dbc" stroke-width="0.25">172.30.0.1</text>
<text x="0.00" y="0.00" font-size="13.81" fill="#bec5cb" font-weight="normal" font-family="Liberation Sans" transform="translate(892.42 422.00) scale(0.9555 1)"  stroke="#bec5cb" stroke-width="0.25">0</text>
<text x="0.00" y="0.00" font-size="13.81" fill="#bec5cb" font-weight="normal" font-family="Liberation Sans" transform="translate(1093.97 422.00) scale(0.9888 1)"  stroke="#bec5cb" stroke-width="0.25">aaaa</text>
<text x="0.00" y="0.00" font-size="13.81" fill="#bec5cb" font-weight="normal" font-family="Liberation Sans" transform="translate(1296.02 422.00) scale(1.0102 1)"  stroke="#bec5cb" stroke-width="0.25">vvvvvvvvv</text>
<text x="0.00" y="0.00" font-size="13.81" fill="#bec5cb" font-weight="normal" font-family="Liberation Sans" transform="translate(1498.65 422.00) scale(0.9690 1)"  stroke="#bec5cb" stroke-width="0.25">PIHOLE</text>
<text x="0.00" y="0.00" font-size="13.95" fill="#bec5cb" font-weight="normal" font-family="Liberation Sans" transform="translate(1702.27 422.00) scale(0.9770 1)"  stroke="#bec5cb" stroke-width="0.25">2023-12-21</text>
<text x="0.00" y="0.00" font-size="13.95" fill="#bec5cb" font-weight="normal" font-family="Liberation Sans" transform="translate(1701.92 444.00) scale(0.9809 1)"  stroke="#bec5cb" stroke-width="0.25">10:15:31</text>
<text x="0.00" y="0.00" font-size="13.95" fill="#bec5cb" font-weight="normal" font-family="Liberation Sans" transform="translate(1781.27 422.00) scale(0.9770 1)"  stroke="#bec5cb" stroke-width="0.25">2023-12-21</text>
<text x="0.00" y="0.00" font-size="13.95" fill="#bec5cb" font-weight="normal" font-family="Liberation Sans" transform="translate(1780.92 444.00) scale(0.9809 1)"  stroke="#bec5cb" stroke-width="0.25">10:15:31</text>
<text x="0.00" y="0.00" font-size="13.81" fill="#3c8dbc" font-weight="normal" font-family="Liberation Sans" transform="translate(477.60 474.00) scale(0.9873 1)"  stroke="#3c8dbc" stroke-width="0.25">02:42:ac:1e:00:02</text>
<text x="0.00" y="0.00" font-size="13.81" fill="#3c8dbc" font-weight="normal" font-family="Liberation Sans" transform="translate(688.33 474.00) scale(0.9871 1)"  stroke="#3c8dbc" stroke-width="0.25">172.30.0.2</text>
<text x="0.00" y="0.00" font-size="13.81" fill="#bec5cb" font-weight="normal" font-family="Liberation Sans" transform="translate(892.42 474.00) scale(0.9555 1)"  stroke="#bec5cb" stroke-width="0.25">0</text>
<text x="0.00" y="0.00" font-size="13.81" fill="#bec5cb" font-weight="normal" font-family="Liberation Sans" transform="translate(1093.89 474.00) scale(1.1218 1)"  stroke="#bec5cb" stroke-width="0.25">dddd</text>
<text x="0.00" y="0.00" font-size="13.81" fill="#bec5cb" font-weight="normal" font-family="Liberation Sans" transform="translate(1296.02 474.00) scale(1.0065 1)"  stroke="#bec5cb" stroke-width="0.25">vvvvv2222</text>
<text x="0.00" y="0.00" font-size="13.81" fill="#bec5cb" font-weight="normal" font-family="Liberation Sans" transform="translate(1498.65 474.00) scale(0.9690 1)"  stroke="#bec5cb" stroke-width="0.25">PIHOLE</text>
<text x="0.00" y="0.00" font-size="13.95" fill="#bec5cb" font-weight="normal" font-family="Liberation Sans" transform="translate(1702.27 474.00) scale(0.9770 1)"  stroke="#bec5cb" stroke-width="0.25">2023-12-21</text>
<text x="0.00" y="0.00" font-size="13.95" fill="#bec5cb" font-weight="normal" font-family="Liberation Sans" transform="translate(1701.92 496.00) scale(0.9809 1)"  stroke="#bec5cb" stroke-width="0.25">10:15:31</text>
<text x="0.00" y="0.00" font-size="13.95" fill="#bec5cb" font-weight="normal" font-family="Liberation Sans" transform="translate(1781.27 474.00) scale(0.9770 1)"  stroke="#bec5cb" stroke-width="0.25">2023-12-21</text>
<text x="0.00" y="0.00" font-size="13.95" fill="#bec5cb" font-weight="normal" font-family="Liberation Sans" transform="translate(1780.92 496.00) scale(0.9809 1)"  stroke="#bec5cb" stroke-width="0.25">10:15:31</text>
<text x="0.00" y="0.00" font-size="14.1" fill="#ffffff" font-weight="normal" font-family="Liberation Sans" transform="translate(486.67 551.00) scale(1.0178 1)" stroke="#fff" stroke-width="0.45">Delete all (filters are ignored)</text>
<text x="0.00" y="0.00" font-size="14.24" fill="#bec5cb" font-weight="normal" font-family="Liberation Sans" transform="translate(473.93 602.00) scale(0.9881 1)"  stroke="#bec5cb" stroke-width="0.25">This plugin syncs devices from the PiHole database</text>
<text x="0.00" y="0.00" font-size="14.24" fill="#3c8dbc" font-weight="normal" font-family="Liberation Sans" transform="translate(799.39 602.00) scale(0.9853 1)"  stroke="#3c8dbc" stroke-width="0.25">Read more in the docs.</text>
</svg>
</body></html>
